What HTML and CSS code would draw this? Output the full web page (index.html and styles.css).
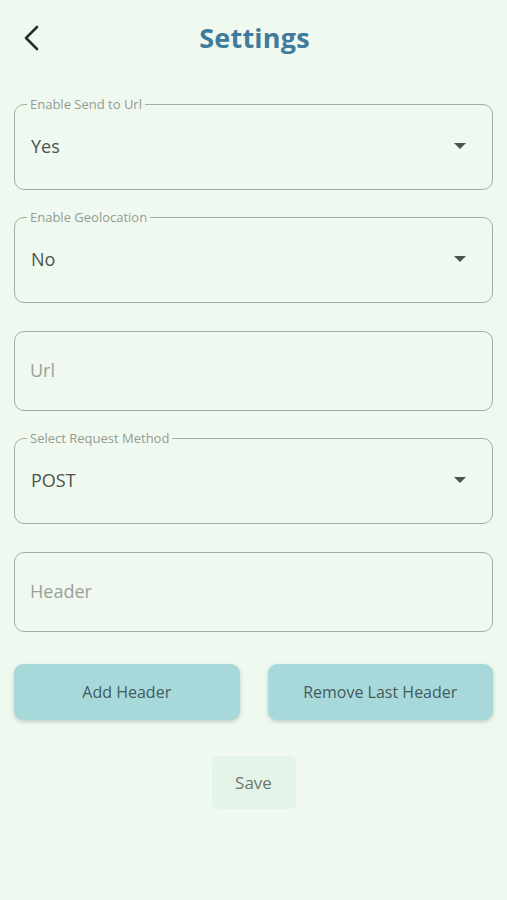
FILE: index.html
```html
<!DOCTYPE html>
<html>
<head>
<meta charset="utf-8">
<link rel="stylesheet" href="styles.css">
</head>
<body>
<div class="page">
  <header class="topbar">
    <span class="back">
      <svg width="18" height="26" viewBox="0 0 18 26"><path d="M15 2 L4 13 L15 24" fill="none" stroke="#2a2f2a" stroke-width="2.6" stroke-linecap="round" stroke-linejoin="round"/></svg>
    </span>
    <h1 class="title">Settings</h1>
  </header>

  <form class="form">
    <fieldset class="select">
      <legend>Enable Send to Url</legend>
      <div class="row"><span class="value">Yes</span><span class="caret"></span></div>
    </fieldset>

    <fieldset class="select">
      <legend>Enable Geolocation</legend>
      <div class="row"><span class="value">No</span><span class="caret"></span></div>
    </fieldset>

    <div class="input"><span class="placeholder">Url</span></div>

    <fieldset class="select">
      <legend>Select Request Method</legend>
      <div class="row"><span class="value">POST</span><span class="caret"></span></div>
    </fieldset>

    <div class="input"><span class="placeholder">Header</span></div>

    <div class="buttons">
      <button type="button" class="btn">Add Header</button>
      <button type="button" class="btn">Remove Last Header</button>
    </div>

    <div class="save-wrap">
      <button type="button" class="save">Save</button>
    </div>
  </form>
</div>
</body>
</html>
```
FILE: styles.css
```css
html, body {
  margin: 0;
  padding: 0;
  background: #f0f9ef;
  font-family: "Open Sans", "Liberation Sans", sans-serif;
}
.page {
  width: 507px;
  height: 900px;
  box-sizing: border-box;
  padding: 0 14px;
}
.topbar {
  height: 74px;
  display: flex;
  align-items: center;
  justify-content: center;
  position: relative;
}
.back {
  position: absolute;
  left: 8px;
  top: 25px;
  display: flex;
}
.title {
  margin: 0 0 0 2px;
  font-family: "Open Sans", sans-serif;
  font-weight: 700;
  font-size: 27px;
  color: #3f7b9c;
  letter-spacing: 0.2px;
}
.form {
  display: flex;
  flex-direction: column;
  margin-top: 23px;
}
.select {
  margin: 0;
  padding: 0 16px;
  border: 1.5px solid #a6ada4;
  border-radius: 10px;
  min-width: 0;
}
.select legend {
  font-size: 13px;
  line-height: 14px;
  color: #949b93;
  padding: 0 3px;
  margin-left: -4px;
}
.row {
  height: 70px;
  padding-bottom: 8px;
  display: flex;
  align-items: center;
  justify-content: space-between;
}
.value {
  font-size: 18px;
  color: #4c524c;
}
.caret {
  width: 0;
  height: 0;
  border-left: 6px solid transparent;
  border-right: 6px solid transparent;
  border-top: 6px solid #4d544d;
  margin-right: 10px;
}
.select + .select {
  margin-top: 20px;
}
.input + .select {
  margin-top: 20px;
}
.select + .input {
  margin-top: 28px;
}
.input {
  height: 80px;
  box-sizing: border-box;
  border: 1.5px solid #a6ada4;
  border-radius: 10px;
  display: flex;
  align-items: center;
  padding-left: 15px;
  padding-bottom: 2px;
}
.placeholder {
  font-size: 18px;
  color: #9aa099;
}
.buttons {
  margin-top: 32px;
  display: flex;
  justify-content: space-between;
  gap: 28px;
}
.btn {
  flex: 1;
  height: 56px;
  border: none;
  border-radius: 9px;
  background: #a7d9db;
  color: #44595b;
  font-family: "Open Sans", sans-serif;
  font-size: 16px;
  box-shadow: 0 2px 4px rgba(0, 0, 0, 0.18);
}
.save-wrap {
  margin-top: 36px;
  display: flex;
  justify-content: center;
}
.save {
  width: 84px;
  height: 53px;
  border: none;
  border-radius: 6px;
  background: #e4f4e9;
  color: #6e776e;
  font-family: "Open Sans", sans-serif;
  font-size: 17px;
}
```
